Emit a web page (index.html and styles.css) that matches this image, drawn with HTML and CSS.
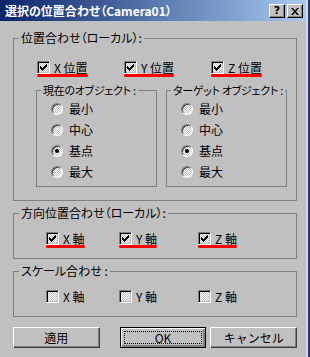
FILE: index.html
```html
<!DOCTYPE html>
<html lang="ja">
<head>
  <meta charset="UTF-8" />
  <title>選択の位置合わせ</title>
  <link rel="stylesheet" href="styles.css">
</head>
<body>
  <div class="window">
    <div class="titlebar">
      <span class="title">選択の位置合わせ（Camera01）</span>
      <div class="tb-buttons">
        <span class="tb-btn">?</span>
        <span class="tb-btn">
          <svg width="8" height="7" viewBox="0 0 8 7"><path d="M0 0h2l2 2.5 2-2.5h2l-3 3.5 3 3.5h-2l-2-2.5-2 2.5h-2l3-3.5z" fill="#000"/></svg>
        </span>
      </div>
    </div>

    <div class="content">
      <section class="group">
        <span class="legend">位置合わせ（ローカル）:</span>
        <div class="checks pos">
          <div class="check">
            <div class="row"><span class="box on"></span>X 位置</div>
            <div class="mark"></div>
          </div>
          <div class="check">
            <div class="row"><span class="box on"></span>Y 位置</div>
            <div class="mark"></div>
          </div>
          <div class="check">
            <div class="row"><span class="box on"></span>Z 位置</div>
            <div class="mark"></div>
          </div>
        </div>

        <div class="subgroups">
          <section class="sub">
            <span class="legend">現在のオブジェクト :</span>
            <div class="radios">
              <div class="radio"><span class="dot"></span>最小</div>
              <div class="radio"><span class="dot"></span>中心</div>
              <div class="radio"><span class="dot on"></span>基点</div>
              <div class="radio"><span class="dot"></span>最大</div>
            </div>
          </section>
          <section class="sub">
            <span class="legend">ターゲット オブジェクト :</span>
            <div class="radios">
              <div class="radio"><span class="dot"></span>最小</div>
              <div class="radio"><span class="dot"></span>中心</div>
              <div class="radio"><span class="dot on"></span>基点</div>
              <div class="radio"><span class="dot"></span>最大</div>
            </div>
          </section>
        </div>
      </section>

      <section class="group">
        <span class="legend">方向位置合わせ（ローカル）:</span>
        <div class="checks axis">
          <div class="check">
            <div class="row"><span class="box on"></span>X 軸</div>
            <div class="mark"></div>
          </div>
          <div class="check">
            <div class="row"><span class="box on"></span>Y 軸</div>
            <div class="mark"></div>
          </div>
          <div class="check">
            <div class="row"><span class="box on"></span>Z 軸</div>
            <div class="mark"></div>
          </div>
        </div>
      </section>

      <section class="group">
        <span class="legend">スケール合わせ :</span>
        <div class="checks axis plain">
          <div class="check">
            <div class="row"><span class="box"></span>X 軸</div>
          </div>
          <div class="check">
            <div class="row"><span class="box"></span>Y 軸</div>
          </div>
          <div class="check">
            <div class="row"><span class="box"></span>Z 軸</div>
          </div>
        </div>
      </section>

      <div class="buttons">
        <button class="btn">適用</button>
        <button class="btn ok"><span>OK</span></button>
        <button class="btn cancel">キャンセル</button>
      </div>
    </div>
  </div>
</body>
</html>
```

FILE: styles.css
```css
body {
  margin: 0;
  background: #283878;
  font-family: "Noto Sans CJK JP", "Noto Sans", sans-serif;
  font-size: 12px;
  font-feature-settings: "palt";
  color: #000;
}
.window {
  width: 308px;
  height: 357px;
  box-sizing: border-box;
  overflow: hidden;
  background: #c0c0c0;
  border-right: 2px solid #d8d8d8;
}

/* title bar */
.titlebar {
  height: 21px;
  display: flex;
  justify-content: space-between;
  align-items: center;
  padding: 0 3px 0 5px;
  background: linear-gradient(to right, #0a246a, #a6caf0);
  color: white;
  font-weight: bold;
  font-size: 12px;
  line-height: 14px;
}
.tb-buttons {
  display: flex;
  gap: 2px;
  align-self: flex-start;
  margin-top: 4px;
}
.tb-btn {
  width: 16px;
  height: 14px;
  box-sizing: border-box;
  display: flex;
  align-items: center;
  justify-content: center;
  background: #c0c0c0;
  color: #000;
  font-family: "DejaVu Sans", sans-serif;
  font-size: 11px;
  font-weight: bold;
  border: 1px solid;
  border-color: #fff #000 #000 #fff;
  box-shadow: inset -1px -1px 0 #808080;
}

.content {
  padding: 17px 9px 0 13px;
}

/* group boxes: the caption sits on the top border */
.group, .sub {
  border: 1px solid #808080;
}
.group + .group {
  margin-top: 12px;
}
.legend {
  display: table;
  margin: -8px 0 0 5px;
  padding: 0 2px;
  line-height: 14px;
  white-space: nowrap;
  background: #c0c0c0;
}
.sub .legend {
  font-size: 11px;
  margin-left: 4px;
  letter-spacing: -0.3px;
}

.checks {
  display: grid;
}
.checks.pos {
  grid-template-columns: 87px 87px auto;
  padding: 16px 0 0 23px;
}
.checks.axis {
  grid-template-columns: 73px 79px auto;
  padding: 12px 0 10px 32px;
}
.checks.plain {
  padding-bottom: 13px;
}
.check {
  justify-self: start;
}
.check .row {
  display: flex;
  align-items: center;
  gap: 4px;
  height: 13px;
}
.mark {
  height: 3px;
  background: #f00;
  border-radius: 2px;
}

.box {
  width: 13px;
  height: 13px;
  box-sizing: border-box;
  border: 1px solid;
  border-color: #808080 #fff #fff #808080;
  box-shadow: inset 1px 1px 0 #000, inset -1px -1px 0 #c0c0c0;
  background: repeating-conic-gradient(#fff 0 25%, #c0c0c0 0 50%) 0 0 / 2px 2px;
  display: flex;
  align-items: center;
  justify-content: center;
}
.box.on::after {
  content: "";
  width: 7px;
  height: 7px;
  background: url("data:image/svg+xml,%3Csvg xmlns='http://www.w3.org/2000/svg' width='7' height='7'%3E%3Cpath d='M0 2h1v1h1v1h1v-1h1v-1h1v-1h1v-1h1v3h-1v1h-1v1h-1v1h-1v1h-1v-1h-1v-1h-1z' fill='%23000'/%3E%3C/svg%3E");
}

.subgroups {
  display: flex;
  align-items: flex-start;
  gap: 9px;
  padding: 13px 9px 13px 22px;
}
.sub {
  flex: 1;
  min-width: 0;
}
.radios {
  display: flex;
  flex-direction: column;
  padding: 1px 0 4px 14px;
}
.radio {
  height: 21px;
  display: flex;
  align-items: center;
  gap: 6px;
}
.dot {
  width: 12px;
  height: 12px;
  box-sizing: border-box;
  border-radius: 50%;
  border: 1px solid;
  border-color: #808080 #fff #fff #808080;
  box-shadow: inset 1px 1px 0 #404040;
  background: repeating-conic-gradient(#fff 0 25%, #c0c0c0 0 50%) 0 0 / 2px 2px;
  display: flex;
  align-items: center;
  justify-content: center;
}
.dot.on::after {
  content: "";
  width: 4px;
  height: 4px;
  border-radius: 50%;
  background: #000;
}

/* buttons */
.buttons {
  display: flex;
  margin-top: 10px;
}
.btn {
  width: 87px;
  height: 21px;
  padding: 0;
  font-family: inherit;
  font-size: 12px;
  color: #000;
  background: #c0c0c0;
  border: 1px solid;
  border-color: #fff #404040 #404040 #fff;
  box-shadow: inset -1px -1px 0 #808080;
}
.btn.ok {
  margin-left: 20px;
  border-color: #000;
  box-shadow: inset 1px 1px 0 #fff, inset -2px -2px 0 #808080;
  display: flex;
  padding: 3px;
}
.btn.ok span {
  flex: 1;
  border: 1px dotted #000;
  line-height: 11px;
}
.btn.cancel {
  margin-left: 4px;
}
```
